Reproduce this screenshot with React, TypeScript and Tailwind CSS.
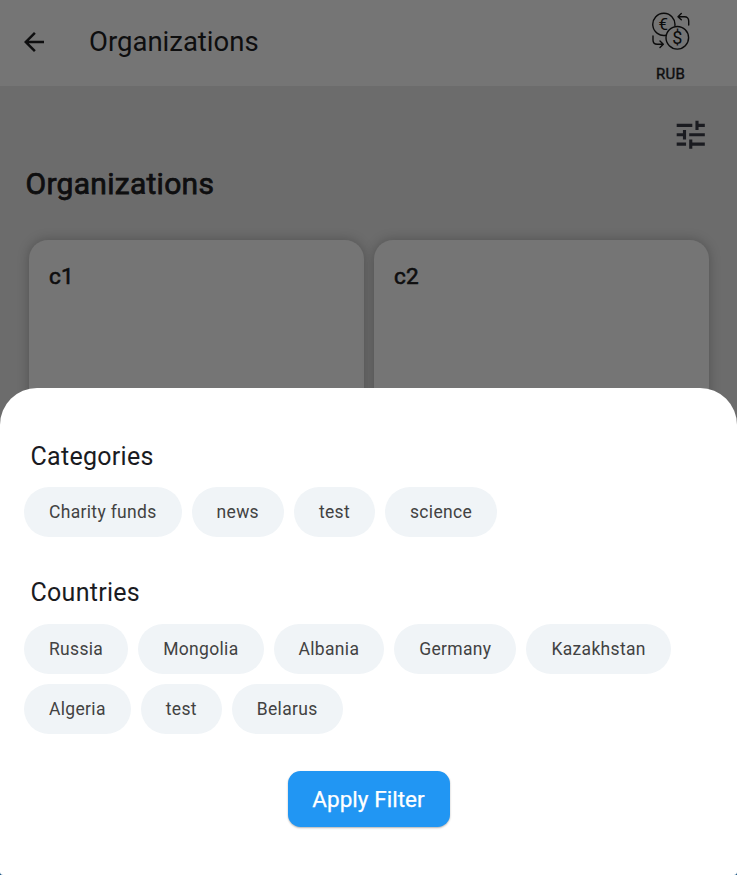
import { MdArrowBack, MdTune } from "react-icons/md";

const categories = ["Charity funds", "news", "test", "science"];
const countries = ["Russia", "Mongolia", "Albania", "Germany", "Kazakhstan", "Algeria", "test", "Belarus"];

function CurrencyIcon() {
  return (
    <svg width="38" height="38" viewBox="0 0 38 38" fill="none" stroke="#0b0b0b" strokeWidth="1.4" strokeLinecap="round" strokeLinejoin="round">
      <path d="M14.2 23.2A11.1 11.1 0 1 1 22.9 13.5" />
      <circle cx="25.3" cy="25.8" r="11.3" />
      <path d="M36.700 13v-4c0-2.600-1.600-4.300-4.200-4.300h-6.300M29.300 1.600l-3.300 3.100l3.300 3.100" />
      <path d="M1 24v4c0 2.600 1.600 4.300 4.200 4.300h5.800M8 29.100l3.300 3.200l-3.300 3.200" />
      <text x="11.400" y="18.200" textAnchor="middle" fontSize="17" className="font-['Roboto',sans-serif]" fill="#0b0b0b" stroke="none">€</text>
      <text x="25.300" y="32" textAnchor="middle" fontSize="18" className="font-['Roboto',sans-serif]" fill="#0b0b0b" stroke="none">$</text>
    </svg>
  );
}

function Chips({ items }: { items: string[] }) {
  return (
    <div className="flex flex-wrap gap-[10px] pl-6 pr-6">
      {items.map((item) => (
        <button key={item} className="h-[50px] rounded-full bg-[#f0f4f7] px-[25px] pt-px text-[17.5px] tracking-[0.32px] text-[#424242]">
          {item}
        </button>
      ))}
    </div>
  );
}

function Card({ title }: { title: string }) {
  return (
    <div className="h-[300px] flex-1 rounded-[19px] bg-[#757575] px-5 pt-[21px] text-[22.5px] leading-[30px] tracking-[0.3px] shadow-[0_0_12px_rgba(0,0,0,0.25)] [-webkit-text-stroke:0.6px]">
      {title}
    </div>
  );
}

export default function App() {
  return (
    <div className="relative h-[875px] w-full overflow-hidden bg-[#6c6c6c] font-['Roboto',sans-serif] text-[#0e0e0f]">
      <header className="flex h-[86px] items-start bg-[#757575] pl-[19px] pr-[47px]">
        <MdArrowBack className="mt-[27px] size-[30px]" />
        <h1 className="ml-10 mt-[25px] flex-1 text-[27.5px] leading-[34px]">Organizations</h1>
        <div className="flex flex-col items-center pt-3">
          <CurrencyIcon />
          <span className="mt-[14px] pr-px text-[15px] leading-5 tracking-[0.15px] [-webkit-text-stroke:0.4px]">RUB</span>
        </div>
      </header>
      <div className="flex justify-end pr-7 pt-[29.5px]">
        <MdTune className="size-[37.5px] text-[#1a1b20]" />
      </div>
      <h2 className="ml-[25.5px] mt-[11.5px] text-[30px] leading-[38px] tracking-[0.28px] [-webkit-text-stroke:0.75px]">Organizations</h2>
      <main className="mt-[37.5px] flex gap-[10px] pl-[29px] pr-7">
        <Card title="c1" />
        <Card title="c2" />
      </main>
      <div className="absolute inset-x-0 bottom-0 h-1 bg-[#115080]" />
      <section className="absolute inset-x-0 bottom-0 top-[388px] flex flex-col rounded-b-[3px] rounded-t-[37px] bg-white">
        <h3 className="ml-[30.5px] mt-[54px] text-[25px] leading-[30px] tracking-[0.28px] text-[#1a1b1f]">Categories</h3>
        <div className="mt-[15px]">
          <Chips items={categories} />
        </div>
        <h3 className="ml-[30.5px] mt-[41px] text-[25px] leading-[30px] tracking-[0.28px] text-[#1a1b1f]">Countries</h3>
        <div className="mt-[15.5px]">
          <Chips items={countries} />
        </div>
        <button className="mt-[37.5px] h-14 w-[162px] self-center rounded-[12.5px] bg-[#2196f3] pt-px text-[22.5px] tracking-[0.05px] text-white shadow-[0_1px_2px_rgba(0,0,0,0.3)] [-webkit-text-stroke:0.25px]">
          Apply Filter
        </button>
      </section>
    </div>
  );
}
